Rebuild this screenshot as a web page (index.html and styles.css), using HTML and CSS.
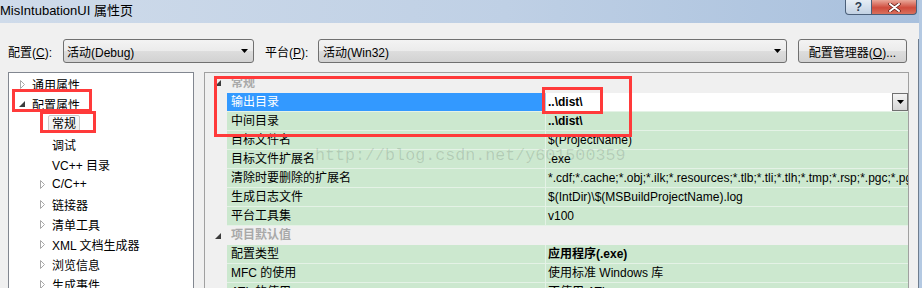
FILE: index.html
```html
<!DOCTYPE html>
<html lang="zh-CN">
<head>
    <meta charset="UTF-8">
    <title>MisIntubationUI 属性页</title>
    <link rel="stylesheet" href="styles.css">
</head>
<body>
    <div class="window">
        <div class="titlebar">
            <span class="title">MisIntubationUI 属性页</span>
            <div class="caption-btns">
                <span class="cap-btn help">?</span>
                <span class="cap-btn close">
                    <svg width="13" height="9" viewBox="0 0 13 9">
                        <path d="M2 1 L11 8 M11 1 L2 8" stroke="#5a1a14" stroke-width="3.4" stroke-linecap="round"/>
                        <path d="M2 1 L11 8 M11 1 L2 8" stroke="#fff" stroke-width="2" stroke-linecap="round"/>
                    </svg>
                </span>
            </div>
        </div>

        <div class="client">
            <div class="config-bar">
                <label class="lbl-config">配置(<u>C</u>):</label>
                <div class="combo combo-config">
                    <span>活动(Debug)</span>
                    <svg class="arrow" width="7" height="4"><path d="M0 0 H7 L3.5 4 Z" fill="#000"/></svg>
                </div>
                <label class="lbl-platform">平台(<u>P</u>):</label>
                <div class="combo combo-platform">
                    <span>活动(Win32)</span>
                    <svg class="arrow" width="7" height="4"><path d="M0 0 H7 L3.5 4 Z" fill="#000"/></svg>
                </div>
                <button class="btn-manager">配置管理器(<u>O</u>)...</button>
            </div>

            <div class="main">
                <ul class="tree">
                    <li class="lv1"><svg class="tw" width="13" height="9"><path d="M1.5 0.5 L5.5 4.5 L1.5 8.5 Z" fill="#fff" stroke="#a8a8a8"/></svg>通用属性</li>
                    <li class="lv1"><svg class="tw" width="13" height="6"><path d="M6 0 L6 6 L0 6 Z" fill="#3c3c3c"/></svg>配置属性</li>
                    <li class="lv2"><span class="tw"></span><span class="current">常规</span></li>
                    <li class="lv2"><span class="tw"></span>调试</li>
                    <li class="lv2"><span class="tw"></span>VC++ 目录</li>
                    <li class="lv2"><svg class="tw" width="13" height="9"><path d="M1.5 0.5 L5.5 4.5 L1.5 8.5 Z" fill="#fff" stroke="#a8a8a8"/></svg>C/C++</li>
                    <li class="lv2"><svg class="tw" width="13" height="9"><path d="M1.5 0.5 L5.5 4.5 L1.5 8.5 Z" fill="#fff" stroke="#a8a8a8"/></svg>链接器</li>
                    <li class="lv2"><svg class="tw" width="13" height="9"><path d="M1.5 0.5 L5.5 4.5 L1.5 8.5 Z" fill="#fff" stroke="#a8a8a8"/></svg>清单工具</li>
                    <li class="lv2"><svg class="tw" width="13" height="9"><path d="M1.5 0.5 L5.5 4.5 L1.5 8.5 Z" fill="#fff" stroke="#a8a8a8"/></svg>XML 文档生成器</li>
                    <li class="lv2"><svg class="tw" width="13" height="9"><path d="M1.5 0.5 L5.5 4.5 L1.5 8.5 Z" fill="#fff" stroke="#a8a8a8"/></svg>浏览信息</li>
                    <li class="lv2"><svg class="tw" width="13" height="9"><path d="M1.5 0.5 L5.5 4.5 L1.5 8.5 Z" fill="#fff" stroke="#a8a8a8"/></svg>生成事件</li>
                    <li class="lv2"><svg class="tw" width="13" height="9"><path d="M1.5 0.5 L5.5 4.5 L1.5 8.5 Z" fill="#fff" stroke="#a8a8a8"/></svg>自定义生成步骤</li>
                </ul>

                <div class="grid">
                    <div class="cat cat-first">
                        <span class="gutter"><svg width="6" height="6"><path d="M6 0 L6 6 L0 6 Z" fill="#3c3c3c"/></svg></span>
                        <span class="cat-label">常规</span>
                    </div>
                    <div class="row sel">
                        <span class="gutter"></span>
                        <span class="name">输出目录</span>
                        <span class="value b">..\dist\<span class="dd"><svg width="7" height="4"><path d="M0 0 H7 L3.5 4 Z" fill="#000"/></svg></span></span>
                    </div>
                    <div class="row">
                        <span class="gutter"></span>
                        <span class="name">中间目录</span>
                        <span class="value b">..\dist\</span>
                    </div>
                    <div class="row">
                        <span class="gutter"></span>
                        <span class="name">目标文件名</span>
                        <span class="value">$(ProjectName)</span>
                    </div>
                    <div class="row">
                        <span class="gutter"></span>
                        <span class="name">目标文件扩展名</span>
                        <span class="value">.exe</span>
                    </div>
                    <div class="row">
                        <span class="gutter"></span>
                        <span class="name">清除时要删除的扩展名</span>
                        <span class="value">*.cdf;*.cache;*.obj;*.ilk;*.resources;*.tlb;*.tli;*.tlh;*.tmp;*.rsp;*.pgc;*.pgd;*.meta;$(TargetPath)</span>
                    </div>
                    <div class="row">
                        <span class="gutter"></span>
                        <span class="name">生成日志文件</span>
                        <span class="value">$(IntDir)\$(MSBuildProjectName).log</span>
                    </div>
                    <div class="row">
                        <span class="gutter"></span>
                        <span class="name">平台工具集</span>
                        <span class="value">v100</span>
                    </div>
                    <div class="cat">
                        <span class="gutter"><svg width="6" height="6"><path d="M6 0 L6 6 L0 6 Z" fill="#3c3c3c"/></svg></span>
                        <span class="cat-label">项目默认值</span>
                    </div>
                    <div class="row">
                        <span class="gutter"></span>
                        <span class="name">配置类型</span>
                        <span class="value b">应用程序(.exe)</span>
                    </div>
                    <div class="row">
                        <span class="gutter"></span>
                        <span class="name">MFC 的使用</span>
                        <span class="value">使用标准 Windows 库</span>
                    </div>
                    <div class="row">
                        <span class="gutter"></span>
                        <span class="name">ATL 的使用</span>
                        <span class="value">不使用 ATL</span>
                    </div>
                </div>
            </div>
        </div>

        <!-- 标注框 -->
        <div class="mark mark-tree1"></div>
        <div class="mark mark-tree2"></div>
        <div class="mark mark-grid1"></div>
        <div class="mark mark-grid2"></div>

        <div class="watermark">http://blog.csdn.net/y601500359</div>
    </div>
</body>
</html>
```

FILE: styles.css
```css
* {
    padding: 0px;
    margin: 0px;
    box-sizing: border-box;
}

body {
    width: 922px;
    height: 288px;
    overflow: hidden;
    background-color: #f0f0f0;
    font-family: "Liberation Sans", "Noto Sans CJK SC", sans-serif;
    font-size: 12px;
    color: #000;
}

.window {
    position: relative;
    width: 922px;
    height: 288px;
    overflow: hidden;
    border-right: 3px solid #b4c9e2;
}

/* 标题栏 */
.titlebar {
    height: 23px;
    display: flex;
    align-items: flex-start;
    background: linear-gradient(to right, #cfdbea 0%, #bfd0e5 55%, #a8c0dd 100%);
}

.title {
    line-height: 22px;
    font-size: 13px;
    color: #000;
}

.caption-btns {
    margin-left: auto;
    margin-right: 2px;
    display: flex;
}

.cap-btn {
    height: 15px;
    display: flex;
    align-items: center;
    justify-content: center;
    border: 1px solid #4b5f79;
    border-top: none;
}

.help {
    width: 27px;
    border-radius: 0px 0px 0px 4px;
    background: linear-gradient(#e6edf5, #c2d1e3);
    color: #2d3c52;
    font-size: 12px;
    font-weight: 700;
    line-height: 14px;
}

.close {
    width: 45px;
    border-left: none;
    border-radius: 0px 0px 4px 0px;
    background: linear-gradient(#e9a89a, #cf4b3c 55%, #d9705c);
}

/* 客户区 */
.client {
    height: 265px;
    border-right: 1px solid #6e7d8f;
}

.config-bar {
    display: flex;
    align-items: center;
    height: 24px;
    margin-top: 16px;
    padding-left: 8px;
}

.lbl-config {
    width: 55px;
}

.lbl-platform {
    width: 53px;
    margin-left: 11px;
}

.combo {
    height: 24px;
    display: flex;
    align-items: center;
    padding: 0px 5px 0px 3px;
    border: 1px solid #707070;
    border-radius: 3px;
    background: linear-gradient(#f3f3f3 0%, #ebebeb 50%, #dddddd 51%, #d2d2d2 100%);
}

.combo .arrow {
    margin-left: auto;
}

.combo-config {
    width: 191px;
}

.combo-platform {
    width: 469px;
    padding-left: 4px;
}

.btn-manager {
    width: 109px;
    height: 24px;
    margin-left: 11px;
    border: 1px solid #707070;
    border-radius: 3px;
    background: linear-gradient(#f3f3f3 0%, #ebebeb 50%, #dddddd 51%, #d2d2d2 100%);
    font-family: inherit;
    font-size: 12px;
    color: #000;
}

.main {
    display: flex;
    margin-top: 9px;
    padding-left: 8px;
}

/* 左侧树 */
.tree {
    width: 186px;
    height: 230px;
    padding-top: 1px;
    list-style: none;
    background-color: #fff;
    border: 1px solid #828790;
}

.tree li {
    height: 20px;
    display: flex;
    align-items: center;
    white-space: nowrap;
}

.tree .tw {
    width: 13px;
    flex: none;
}

.lv1 {
    padding-left: 10px;
}

.lv2 {
    padding-left: 30px;
}

.current {
    margin-left: -4px;
    padding: 0px 3px;
    line-height: 16px;
    border: 1px solid #c9c9c9;
    border-radius: 2px;
    background: linear-gradient(#fafafa, #ececec);
}

/* 属性表格 */
.grid {
    width: 705px;
    height: 230px;
    margin-left: 10px;
    border: 1px solid #a0a0a0;
    background-color: #f0f0f0;
    overflow: hidden;
}

.gutter {
    width: 22px;
    flex: none;
    display: flex;
    align-items: center;
    padding-left: 10px;
}

.cat {
    display: flex;
    height: 19px;
    line-height: 19px;
}

.cat-first {
    height: 20px;
    line-height: 20px;
}

.cat-label {
    padding-left: 4px;
    color: #a9a9a9;
    font-weight: 700;
}

.row {
    display: flex;
    height: 19px;
    line-height: 18px;
}

.row .name {
    width: 319px;
    flex: none;
    padding-left: 4px;
    background-color: #cce8cf;
    border-right: 1px solid #e4f2e6;
    border-bottom: 1px solid #e4f2e6;
    white-space: nowrap;
}

.row .value {
    flex: 1;
    display: flex;
    align-items: center;
    padding-left: 2px;
    background-color: #cce8cf;
    border-bottom: 1px solid #e4f2e6;
    white-space: nowrap;
    overflow: hidden;
}

.b {
    font-weight: 700;
}

.row.sel .name {
    background-color: #3399ff;
    color: #fff;
    border-right-color: #9cc9f0;
}

.row.sel .value {
    background-color: #fff;
}

.dd {
    width: 16px;
    height: 18px;
    margin-left: auto;
    display: flex;
    align-items: center;
    justify-content: center;
    border: 1px solid #707070;
    background: linear-gradient(#f4f4f4, #d6d6d6);
}

/* 红色标注框 */
.mark {
    position: absolute;
    border: 3px solid #ff3a3a;
}

.mark-tree1 {
    left: 12px;
    top: 89px;
    width: 80px;
    height: 23px;
}

.mark-tree2 {
    left: 40px;
    top: 111px;
    width: 56px;
    height: 22px;
}

.mark-grid1 {
    left: 214px;
    top: 76px;
    width: 418px;
    height: 61px;
}

.mark-grid2 {
    left: 542px;
    top: 87px;
    width: 61px;
    height: 27px;
}

.watermark {
    position: absolute;
    left: 315px;
    top: 147px;
    font-family: "Liberation Mono", monospace;
    font-size: 16.7px;
    line-height: 17px;
    color: rgba(0, 0, 0, 0.13);
    pointer-events: none;
}
```
